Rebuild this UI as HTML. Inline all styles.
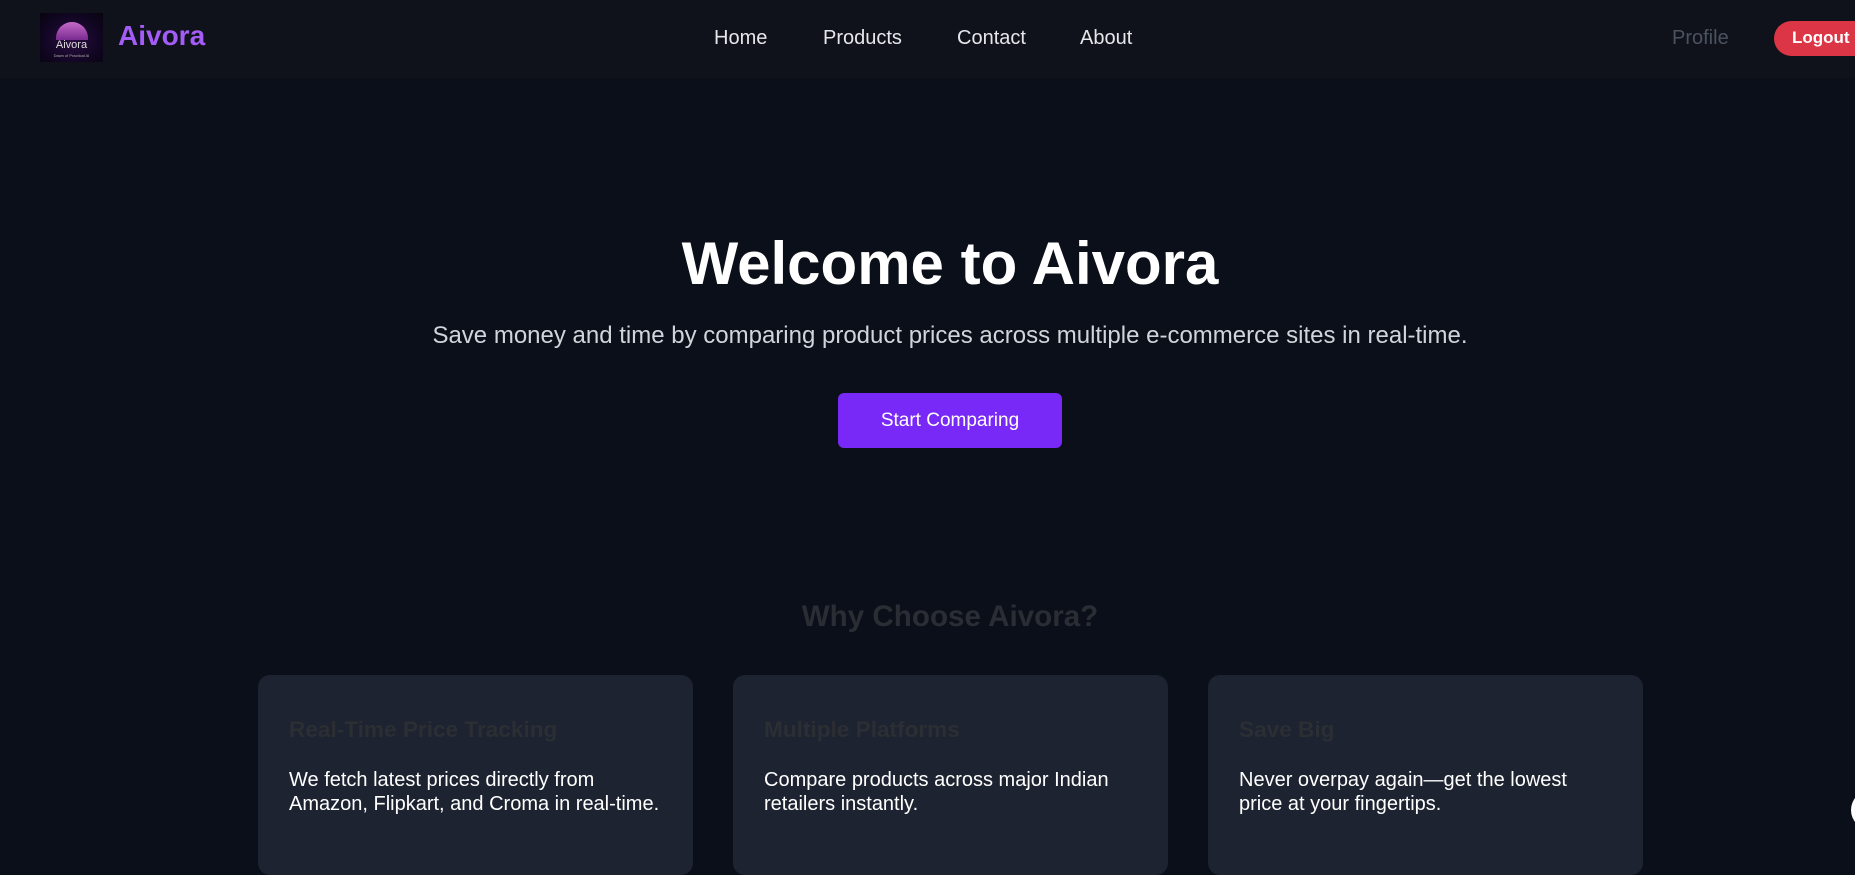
<!DOCTYPE html>
<html><head><meta charset="utf-8"><style>
*{margin:0;padding:0;box-sizing:border-box}
body{width:1855px;height:837px;overflow:hidden;background:#0b0f19;font-family:"Liberation Sans",Arial,sans-serif;position:relative}
nav{position:absolute;left:0;top:0;width:1855px;height:78px;background:#0f121b}
.logo{position:absolute;left:40px;top:13px;width:63px;height:49px;background:radial-gradient(ellipse at 50% 55%,#2a0e40 0%,#120624 60%,#07040f 100%);overflow:hidden}
.dome{position:absolute;left:16px;top:9px;width:32px;height:18px;border-radius:16px 16px 0 0;background:linear-gradient(#c46bc9,#7a2b8f)}
.logo .t{position:absolute;left:0;width:63px;text-align:center;top:26px;color:#ddd;font-size:11px}
.logo .s{position:absolute;left:0;width:63px;text-align:center;top:40px;color:#aaa;font-size:4px}
.brand{position:absolute;left:118px;top:20px;color:#a35cf5;font-size:28px;font-weight:bold}
.nl{position:absolute;top:27px;color:#e5e7eb;font-size:20px}
.profile{position:absolute;left:1672px;top:27px;color:#4b5260;font-size:20px}
.logout{position:absolute;left:1774px;top:21px;width:100px;height:35px;border-radius:18px;background:#dc3545;color:#fff;font-weight:bold;font-size:17px;padding:7px 0 0 18px}
h1{position:absolute;left:0;width:1900px;text-align:center;top:229px;color:#fff;font-size:60px;font-weight:bold}
.sub{position:absolute;left:0;width:1900px;text-align:center;top:322px;color:#d1d5db;font-size:24px}
.btn{position:absolute;left:838px;top:393px;width:224px;height:55px;border-radius:6px;background:#7828f7;color:#fff;font-size:19px;text-align:center;line-height:55px}
h2{position:absolute;left:0;width:1900px;text-align:center;top:600px;color:#2a2d33;font-size:29.6px;font-weight:bold}
.card{position:absolute;top:675px;width:435px;height:200px;border-radius:12px;background:#1d2330;padding:42px 31px}
.card h3{color:#2b2e33;font-size:22.6px;font-weight:bold;margin-bottom:25px}
.card p{color:#fff;font-size:20px;line-height:24px}
.circ{position:absolute;left:1851px;top:790px;width:40px;height:40px;border-radius:50%;background:#fff}
</style></head><body>
<nav>
<div class="logo"><div class="dome"></div><div class="t">Aivora</div><div class="s">Dawn of Practical AI</div></div>
<div class="brand">Aivora</div>
<div class="nl" style="left:714px">Home</div>
<div class="nl" style="left:823px">Products</div>
<div class="nl" style="left:957px">Contact</div>
<div class="nl" style="left:1080px">About</div>
<div class="profile">Profile</div>
<div class="logout">Logout</div>
</nav>
<h1>Welcome to Aivora</h1>
<div class="sub">Save money and time by comparing product prices across multiple e-commerce sites in real-time.</div>
<div class="btn">Start Comparing</div>
<h2>Why Choose Aivora?</h2>
<div class="card" style="left:258px"><h3>Real-Time Price Tracking</h3><p>We fetch latest prices directly from<br>Amazon, Flipkart, and Croma in real-time.</p></div>
<div class="card" style="left:733px"><h3>Multiple Platforms</h3><p>Compare products across major Indian<br>retailers instantly.</p></div>
<div class="card" style="left:1208px"><h3>Save Big</h3><p>Never overpay again—get the lowest<br>price at your fingertips.</p></div>
<div class="circ"></div>
</body></html>
